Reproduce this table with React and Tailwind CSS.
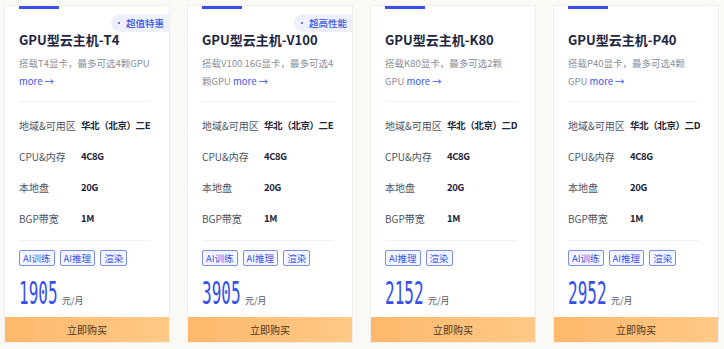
const cards = [
  {
    name: 'GPU型云主机-T4',
    badge: '超值特惠',
    desc: ['搭载T4显卡，最多可选4颗GPU', ''],
    zone: '华北（北京）二E',
    tags: ['AI训练', 'AI推理', '渲染'],
    price: '1905',
  },
  {
    name: 'GPU型云主机-V100',
    badge: '超高性能',
    desc: ['搭载V100 16G显卡，最多可选4', '颗GPU'],
    zone: '华北（北京）二E',
    tags: ['AI训练', 'AI推理', '渲染'],
    price: '3905',
  },
  {
    name: 'GPU型云主机-K80',
    desc: ['搭载K80显卡，最多可选2颗', 'GPU'],
    zone: '华北（北京）二D',
    tags: ['AI推理', '渲染'],
    price: '2152',
  },
  {
    name: 'GPU型云主机-P40',
    desc: ['搭载P40显卡，最多可选4颗', 'GPU'],
    zone: '华北（北京）二D',
    tags: ['AI训练', 'AI推理', '渲染'],
    price: '2952',
  },
]

function Row({ label, value }) {
  return (
    <div className="flex h-[31px] items-center text-[10px] whitespace-nowrap">
      <span className="w-[62px] shrink-0 text-[#4d5465]">{label}</span>
      <span className="text-[9.5px] tracking-[-0.4px] font-bold text-[#1e2537]">{value}</span>
    </div>
  )
}

function Card({ card }) {
  return (
    <div className="relative flex w-[166px] shrink-0 flex-col overflow-hidden border border-[#f0eeea] bg-white">
      <div className="ml-[14px] h-[3px] w-[40px] bg-[#3a4fe6]" />
      {card.badge && (
        <div className="absolute right-0 top-[8px] flex h-[18px] items-center gap-[6px] rounded-l-full bg-[#eef1fc] pl-[7px] pr-[5px] text-[9.5px] font-medium text-[#3c55e6]">
          <span className="h-[2px] w-[2px] rounded-full bg-[#3c55e6]" />
          {card.badge}
        </div>
      )}
      <div className="flex flex-1 flex-col pl-[14px] pr-[18px]">
        <div className="mt-[23px] text-[13px] font-bold leading-[16px] text-[#1d2540] whitespace-nowrap">{card.name}</div>
        <div className="mt-[6px] text-[9.5px] leading-[18px] text-[#8a8f9a] whitespace-nowrap">
          <div>{card.desc[0]}</div>
          <div>
            {card.desc[1]}
            {card.desc[1] && ' '}
            <span className="text-[#3b56ee]">more →</span>
          </div>
        </div>
        <div className="mt-[11px] h-px bg-[#f1f1f3]" />
        <div className="mt-[8px]">
          <Row label="地域&可用区" value={card.zone} />
          <Row label="CPU&内存" value="4C8G" />
          <Row label="本地盘" value="20G" />
          <Row label="BGP带宽" value="1M" />
        </div>
        <div className="mt-[6px] h-px bg-[#f1f1f3]" />
        <div className="mt-[9px] flex gap-[5px]">
          {card.tags.map((t) => (
            <span
              key={t}
              className="flex h-[16px] items-center rounded-[2px] border border-[#7b8cf0] bg-[#f5f7ff] px-[3px] text-[9.5px] text-[#3d55e8]"
            >
              {t}
            </span>
          ))}
        </div>
        <div className="mt-[13px] flex h-[30px] items-end">
          <div className="w-[41px] overflow-visible">
            <span className="inline-block origin-left scale-x-[0.5] font-['DejaVu_Sans_Mono'] text-[32px] leading-[30px] text-[#3551ea]">
              {card.price}
            </span>
          </div>
          <span className="mb-[2px] ml-[2px] text-[9px] text-[#555a66]">元/月</span>
        </div>
      </div>
      <div className="mt-[8px] flex h-[25px] items-center justify-center bg-gradient-to-r from-[#ffb86c] to-[#ffc987] text-[10px] text-[#4a3420]">
        立即购买
      </div>
    </div>
  )
}

export default function App() {
  return (
    <div className="h-[349px] w-[724px] overflow-hidden bg-[#fbf9f5] font-['Noto_Sans_CJK_SC',sans-serif]">
      <div className="flex gap-[17px] pl-[4px] pt-[5px]">
        {cards.map((c) => (
          <Card key={c.name} card={c} />
        ))}
      </div>
    </div>
  )
}
